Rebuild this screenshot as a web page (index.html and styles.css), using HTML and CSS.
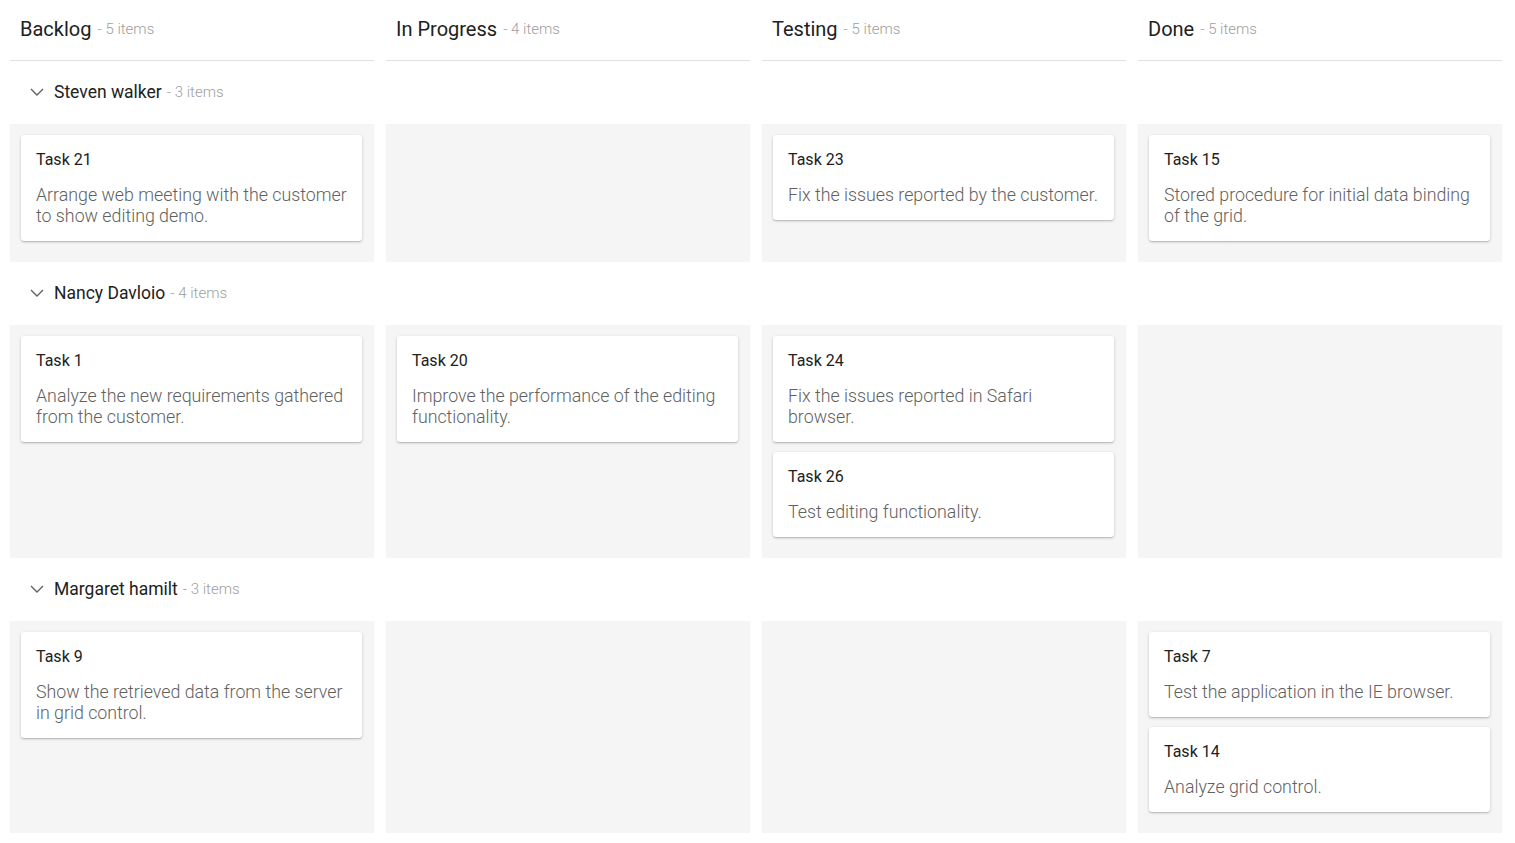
FILE: index.html
```html
<!DOCTYPE html>
<html>
<head>
<meta charset="utf-8">
<link rel="stylesheet" href="styles.css">
</head>
<body>
<div class="board">
  <div class="headers">
    <div class="col-head"><span class="col-title">Backlog</span><span class="count">- 5 items</span></div>
    <div class="col-head"><span class="col-title">In Progress</span><span class="count">- 4 items</span></div>
    <div class="col-head"><span class="col-title">Testing</span><span class="count">- 5 items</span></div>
    <div class="col-head"><span class="col-title">Done</span><span class="count">- 5 items</span></div>
  </div>

  <div class="lane-head">
    <svg class="chev" width="14" height="8" viewBox="0 0 14 8"><path d="M1 1 L7 7 L13 1" fill="none" stroke="#616161" stroke-width="1.4"/></svg>
    <span class="lane-title">Steven walker</span><span class="lane-count">- 3 items</span>
  </div>
  <div class="lane">
    <div class="cell">
      <div class="card"><div class="card-title">Task 21</div><div class="card-desc">Arrange web meeting with the customer to show editing demo.</div></div>
    </div>
    <div class="cell"></div>
    <div class="cell">
      <div class="card"><div class="card-title">Task 23</div><div class="card-desc">Fix the issues reported by the customer.</div></div>
    </div>
    <div class="cell">
      <div class="card"><div class="card-title">Task 15</div><div class="card-desc">Stored procedure for initial data binding of the grid.</div></div>
    </div>
  </div>

  <div class="lane-head">
    <svg class="chev" width="14" height="8" viewBox="0 0 14 8"><path d="M1 1 L7 7 L13 1" fill="none" stroke="#616161" stroke-width="1.4"/></svg>
    <span class="lane-title">Nancy Davloio</span><span class="lane-count">- 4 items</span>
  </div>
  <div class="lane">
    <div class="cell">
      <div class="card"><div class="card-title">Task 1</div><div class="card-desc">Analyze the new requirements gathered from the customer.</div></div>
    </div>
    <div class="cell">
      <div class="card"><div class="card-title">Task 20</div><div class="card-desc">Improve the performance of the editing functionality.</div></div>
    </div>
    <div class="cell">
      <div class="card"><div class="card-title">Task 24</div><div class="card-desc">Fix the issues reported in Safari browser.</div></div>
      <div class="card"><div class="card-title">Task 26</div><div class="card-desc">Test editing functionality.</div></div>
    </div>
    <div class="cell"></div>
  </div>

  <div class="lane-head">
    <svg class="chev" width="14" height="8" viewBox="0 0 14 8"><path d="M1 1 L7 7 L13 1" fill="none" stroke="#616161" stroke-width="1.4"/></svg>
    <span class="lane-title">Margaret hamilt</span><span class="lane-count">- 3 items</span>
  </div>
  <div class="lane">
    <div class="cell">
      <div class="card"><div class="card-title">Task 9</div><div class="card-desc">Show the retrieved data from the server in grid control.</div></div>
    </div>
    <div class="cell"></div>
    <div class="cell"></div>
    <div class="cell">
      <div class="card"><div class="card-title">Task 7</div><div class="card-desc">Test the application in the IE browser.</div></div>
      <div class="card"><div class="card-title">Task 14</div><div class="card-desc">Analyze grid control.</div></div>
    </div>
  </div>
</div>
</body>
</html>
```

FILE: styles.css
```css
html, body {
  margin: 0;
  padding: 0;
  background: #fff;
}
body {
  font-family: Roboto, "Liberation Sans", sans-serif;
  color: #212121;
  overflow: hidden;
}
.board {
  width: 1492px;
  padding: 0 13px 0 10px;
}
.headers {
  display: grid;
  grid-template-columns: repeat(4, 364px);
  column-gap: 12px;
}
.col-head {
  height: 61px;
  border-bottom: 1px solid #e0e0e0;
  padding: 0 0 2px 10px;
  display: flex;
  align-items: center;
  gap: 6px;
  box-sizing: border-box;
}
.col-title {
  font-size: 20px;
  color: #212121;
}
.count {
  font-size: 15px;
  font-weight: 300;
  color: #9e9e9e;
}
.lane-head {
  height: 63px;
  display: flex;
  align-items: center;
  padding: 0 0 2px 20px;
  box-sizing: border-box;
}
.chev {
  margin-right: 10px;
}
.lane-title {
  font-size: 17.5px;
  color: #212121;
  margin-right: 5px;
}
.lane-count {
  font-size: 15px;
  font-weight: 300;
  color: #9e9e9e;
}
.lane {
  display: grid;
  grid-template-columns: repeat(4, 364px);
  column-gap: 12px;
}
.cell {
  background: #f5f5f5;
  padding: 11px 12px 11px 11px;
  display: flex;
  flex-direction: column;
}
.card {
  background: #fff;
  border-radius: 3px;
  box-shadow: 0 1px 3px rgba(0,0,0,0.2), 0 1px 1px rgba(0,0,0,0.1);
  padding: 15px 15px 15px 15px;
  margin-bottom: 10px;
}
.card-title {
  font-size: 16px;
  line-height: 19px;
  color: #212121;
  margin-bottom: 15px;
}
.card-desc {
  font-size: 17.8px;
  font-weight: 300;
  line-height: 21px;
  color: #616161;
}
```
